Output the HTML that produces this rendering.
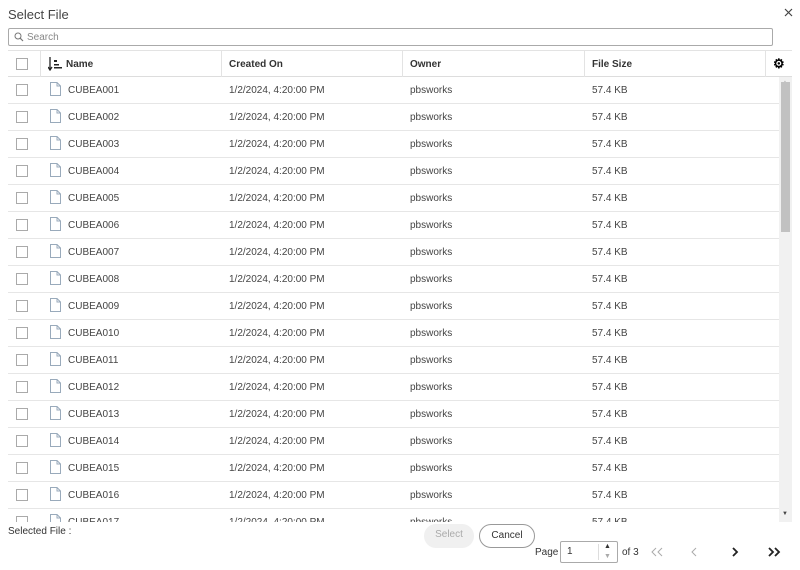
<!DOCTYPE html>
<html><head><style>
*{box-sizing:border-box;margin:0;padding:0}
body{width:800px;height:570px;background:#fff;font-family:"Liberation Sans",sans-serif;color:#333;position:relative;overflow:hidden;font-size:10px}
.abs{position:absolute}
.title{left:8px;top:7px;font-size:13px;color:#444}
.search{left:8px;top:28px;width:765px;height:18px;border:1px solid #aaa;border-radius:2px;color:#888;font-size:10px;padding:3px 0 0 18px}
.hdr{left:8px;top:50px;width:784px;height:27px;border-top:1px solid #e3e3e3;border-bottom:1px solid #ddd;font-weight:bold;font-size:10px;color:#333}
.vd{position:absolute;top:0;width:1px;height:26px;background:#e3e3e3}
.cb{position:absolute;width:12px;height:12px;border:1px solid #aaa;background:#fff}
.rows{left:8px;top:77px;width:771px;height:445px;overflow:hidden}
.row{position:relative;height:27px;border-bottom:1px solid #e6e6e6;font-size:10px;color:#444}
.row span{position:absolute;top:8px}
.sb{left:779px;top:77px;width:13px;height:445px;background:#f1f1f1}
.btn{border-radius:12px;height:24px;font-size:10px;text-align:center;line-height:22px}
</style></head><body>
<div class="abs title">Select File</div>
<svg class="abs" style="left:784px;top:8px" width="9" height="9" viewBox="0 0 9 9"><path d="M1 1L8 8M8 1L1 8" stroke="#444" stroke-width="1.2"/></svg>
<div class="abs search"><svg class="abs" style="left:5px;top:3px" width="10" height="10" viewBox="0 0 10 10"><circle cx="4" cy="4" r="3" fill="none" stroke="#777" stroke-width="1"/><path d="M6.2 6.2L9 9" stroke="#777" stroke-width="1.2"/></svg>Search</div>
<div class="abs hdr">
<div class="cb" style="left:8px;top:7px"></div>
<div class="vd" style="left:32px"></div>
<svg class="abs" style="left:40px;top:6px" width="16" height="14" viewBox="0 0 16 14"><path d="M2 0V12M0 10L2 13L4 10" stroke="#222" stroke-width="1.3" fill="none"/><rect x="6" y="3" width="3" height="2" fill="#222"/><rect x="6" y="7" width="5" height="1.5" fill="#222"/><rect x="6" y="10" width="8" height="1.5" fill="#222"/></svg>
<span class="abs" style="left:58px;top:8px">Name</span>
<div class="vd" style="left:213px"></div><span class="abs" style="left:221px;top:8px">Created On</span>
<div class="vd" style="left:394px"></div><span class="abs" style="left:402px;top:8px">Owner</span>
<div class="vd" style="left:576px"></div><span class="abs" style="left:584px;top:8px">File Size</span>
<div class="vd" style="left:757px"></div><span class="abs" style="left:765px;top:5px;font-size:13px;color:#000">⚙</span>
</div>
<div class="abs rows" id="rows"></div>
<div class="abs sb"><div class="abs" style="left:3px;top:3px;font-size:6px;color:#aaa">▲</div><div class="abs" style="left:2px;top:5px;width:9px;height:150px;background:#c1c1c1"></div><div class="abs" style="left:3px;top:434px;font-size:6px;color:#444">▼</div></div>
<div class="abs" style="left:8px;top:526px;font-size:10px;color:#333">Selected File :</div>
<div class="abs btn" style="left:424px;top:524px;width:50px;background:#f0f0f0;color:#aaa">Select</div>
<div class="abs btn" style="left:479px;top:524px;width:56px;border:1px solid #999;color:#333">Cancel</div>
<div class="abs" style="left:535px;top:547px;font-size:10px">Page</div>
<div class="abs" style="left:560px;top:541px;width:58px;height:22px;border:1px solid #aaa;border-radius:2px;padding:4px 0 0 6px;font-size:10px">1<div class="abs" style="left:37px;top:2px;width:1px;height:16px;background:#ddd"></div><div class="abs" style="left:43px;top:1px;font-size:7px">▲</div><div class="abs" style="left:43px;top:11px;font-size:7px;color:#aaa">▼</div></div>
<div class="abs" style="left:622px;top:547px;font-size:10px">of 3</div>
<svg class="abs" style="left:650px;top:547px" width="14" height="10" viewBox="0 0 14 10"><path d="M6 1L2 5L6 9M12 1L8 5L12 9" fill="none" stroke="#aaa" stroke-width="1"/></svg>
<svg class="abs" style="left:690px;top:547px" width="8" height="10" viewBox="0 0 8 10"><path d="M6 1L2 5L6 9" fill="none" stroke="#aaa" stroke-width="1"/></svg>
<svg class="abs" style="left:731px;top:547px" width="8" height="10" viewBox="0 0 8 10"><path d="M2 1L6 5L2 9" fill="none" stroke="#222" stroke-width="1.8"/></svg>
<svg class="abs" style="left:767px;top:547px" width="14" height="10" viewBox="0 0 14 10"><path d="M2 1L6 5L2 9M8 1L12 5L8 9" fill="none" stroke="#222" stroke-width="1.8"/></svg>
<script>
var h='';for(var i=1;i<=18;i++){var n=('00'+i).slice(-3);
h+='<div class="row"><div class="cb" style="left:8px;top:7px"></div><svg style="position:absolute;left:42px;top:5px" width="11" height="14" viewBox="0 0 11 14"><path d="M0.5 0.5H7L10.5 4V13.5H0.5Z M7 0.5V4H10.5" fill="none" stroke="#9ab" stroke-width="1"/></svg><span style="left:60px">CUBEA'+n+'</span><span style="left:221px">1/2/2024, 4:20:00 PM</span><span style="left:402px">pbsworks</span><span style="left:584px">57.4 KB</span></div>';}
document.getElementById('rows').innerHTML=h;
</script>
</body></html>
